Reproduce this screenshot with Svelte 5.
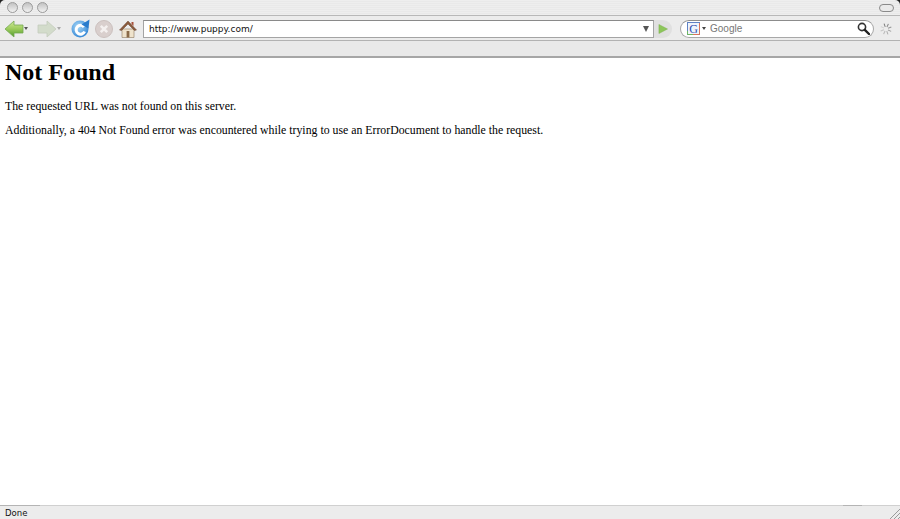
<script>
  const lights = [0, 1, 2]
  const spinner = Array.from({ length: 8 }, (_, i) => i)
</script>

<div class="window">
  <header class="chrome">
    <div class="titlebar">
      <div class="lights">
        {#each lights as l}
          <span class="light"></span>
        {/each}
      </div>
      <span class="pill"></span>
    </div>

    <div class="toolbar">
      <svg class="ico back" width="20" height="18" viewBox="0 0 20 18">
        <defs>
          <linearGradient id="bk" x1="0" y1="0" x2="0" y2="1">
            <stop offset="0" stop-color="#d2eb9a" />
            <stop offset="0.5" stop-color="#9ccb5c" />
            <stop offset="1" stop-color="#4f9a2c" />
          </linearGradient>
        </defs>
        <path d="M1 9 L10 1 V5 H19 V13 H10 V17 Z" fill="url(#bk)" stroke="#74a852" stroke-width="0.8" stroke-linejoin="round" />
      </svg>
      <span class="caret dark"></span>

      <svg class="ico fwd" width="20" height="18" viewBox="0 0 20 18">
        <path d="M19 9 L10 1 V5 H1 V13 H10 V17 Z" fill="#d3dccb" stroke="#c4ccbc" stroke-width="0.8" stroke-linejoin="round" />
      </svg>
      <span class="caret light-caret"></span>

      <svg class="ico reload" width="19" height="19" viewBox="0 0 19 19">
        <defs>
          <radialGradient id="rl" cx="0.4" cy="0.35" r="0.8">
            <stop offset="0" stop-color="#a8d8f7" />
            <stop offset="1" stop-color="#1f78cf" />
          </radialGradient>
        </defs>
        <circle cx="9" cy="10" r="8.5" fill="url(#rl)" />
        <path d="M13 8 A4.4 4.4 0 1 0 13.6 12.5" fill="none" stroke="#fff" stroke-width="3" />
        <path d="M10.5 5.5 L18.5 0.5 L17.5 9.5 Z" fill="#2a7ccc" />
      </svg>

      <svg class="ico stop" width="18" height="18" viewBox="0 0 18 18">
        <circle cx="9" cy="9" r="8.5" fill="#d9cfcd" stroke="#cbc0be" />
        <path d="M5.8 5.8 L12.2 12.2 M12.2 5.8 L5.8 12.2" stroke="#f4f0ef" stroke-width="2.6" />
      </svg>

      <svg class="ico home" width="18" height="18" viewBox="0 0 18 18">
        <path d="M3 9 H15 V17.5 H3 Z" fill="#efe3cc" stroke="#8d7a60" stroke-width="0.6" />
        <path d="M0.5 10 L9 1 L17.5 10 L15.5 10.5 L9 4 L2.5 10.5 Z" fill="#8a5a3c" stroke="#6a4630" stroke-width="0.5" />
        <path d="M12.5 2 H14.5 V6 L12.5 4 Z" fill="#a8503a" />
        <path d="M7.6 11 H10.4 V17.5 H7.6 Z" fill="#8a6a48" />
      </svg>

      <div class="urlbar">
        <span class="url">http://www.puppy.com/</span>
        <span class="url-caret"></span>
      </div>
      <div class="go">
        <svg width="10" height="10" viewBox="0 0 11 11"><path d="M1 0.5 L10.5 5.5 L1 10.5 Z" fill="#8cc65a" stroke="#7bb04c" stroke-width="0.5" /></svg>
      </div>

      <div class="search">
        <svg class="engine" width="13" height="13" viewBox="0 0 13 13">
          <rect x="0.5" y="0.5" width="12" height="12" fill="#eef3fb" stroke="#5f82c4" />
          <path d="M12.5 1 V12.5 H6" fill="none" stroke="#d9745a" />
          <path d="M0.5 9 V12.5 H6" fill="none" stroke="#6fb860" />
          <text x="6.5" y="10.8" class="g">G</text>
        </svg>
        <span class="engine-caret"></span>
        <span class="search-text">Google</span>
        <svg class="glass" width="13" height="13" viewBox="0 0 13 13">
          <circle cx="5" cy="5" r="3.6" fill="#fff" stroke="#333" stroke-width="1.6" />
          <path d="M7.8 7.8 L12 12" stroke="#222" stroke-width="2.4" stroke-linecap="round" />
        </svg>
      </div>

      <svg class="spin" width="12" height="14" viewBox="-7 -7 14 14">
        {#each spinner as s}
          <path d="M0 -2.6 V-6.6" stroke="#7d7d7d" stroke-opacity={1 - s * 0.11} stroke-width="1.2" transform="rotate({s * 45 - 20})" />
        {/each}
      </svg>
    </div>

    <div class="bookmarks"></div>
  </header>

  <main class="page">
    <h1>Not Found</h1>
    <p>The requested URL was not found on this server.</p>
    <p>Additionally, a 404 Not Found error was encountered while trying to use an ErrorDocument to handle the request.</p>
  </main>

  <footer class="status">
    <span class="seg left"></span>
    <span class="seg right"></span>
    <span>Done</span>
    <svg class="grip" width="11" height="11" viewBox="0 0 11 11">
      <path d="M1 11 L11 1 M5 11 L11 5 M9 11 L11 9" stroke="#9a9a9a" stroke-width="1" />
    </svg>
  </footer>
</div>

<style>
  :global(body) {
    background: #fff;
  }
  .window {
    height: 519px;
    width: 900px;
    display: flex;
    flex-direction: column;
    overflow: hidden;
    background: #fff;
  }
  .chrome {
    flex: none;
    height: 58px;
    display: flex;
    flex-direction: column;
    background: #222;
    border-bottom: 2px solid #a6a6a6;
    box-sizing: border-box;
  }
  .titlebar {
    height: 16px;
    flex: none;
    display: flex;
    align-items: center;
    justify-content: space-between;
    padding: 0 6px 0 7px;
    background: repeating-linear-gradient(#eeeeee 0 1px, #e9e9e9 1px 2px);
    border-bottom: 1px solid #b8b8b8;
    border-radius: 5px 5px 0 0;
    box-sizing: border-box;
  }
  .lights {
    display: flex;
    gap: 4px;
  }
  .light {
    width: 11px;
    height: 11px;
    border-radius: 50%;
    box-sizing: border-box;
    border: 1px solid #9b9b9b;
    background: linear-gradient(#c2c2c2, #f2f2f2);
  }
  .pill {
    width: 13px;
    height: 6px;
    border: 1px solid #8a8a8a;
    border-radius: 4px;
    background: #eaeaea;
  }
  .toolbar {
    height: 25px;
    flex: none;
    display: flex;
    align-items: center;
    padding: 1px 0 0 4px;
    box-sizing: border-box;
    border-bottom: 1px solid #b2b2b2;
    background: #ececec;
  }
  .ico {
    flex: none;
  }
  .caret {
    width: 0;
    height: 0;
    border-left: 2.5px solid transparent;
    border-right: 2.5px solid transparent;
    border-top: 3px solid #555;
  }
  .caret.light-caret {
    border-top-color: #aaa;
  }
  .fwd {
    margin-left: 9px;
  }
  .reload {
    margin-left: 10px;
  }
  .stop {
    margin-left: 5px;
  }
  .home {
    margin-left: 6px;
  }
  .urlbar {
    margin-left: 6px;
    width: 511px;
    height: 18px;
    box-sizing: border-box;
    background: #fff;
    border: 1px solid #a4a4a4;
    border-top-color: #8a8a8a;
    display: flex;
    align-items: center;
    justify-content: space-between;
    padding: 0 4px 0 5px;
  }
  .url {
    font: 9px "DejaVu Sans", sans-serif;
    color: #111;
  }
  .url-caret {
    width: 0;
    height: 0;
    border-left: 3.5px solid transparent;
    border-right: 3.5px solid transparent;
    border-top: 6px solid #555;
  }
  .go {
    width: 18px;
    height: 18px;
    flex: none;
    display: flex;
    align-items: center;
    justify-content: center;
    background: #e0e0e0;
    border-radius: 0 9px 9px 0;
  }
  .search {
    margin-left: 8px;
    width: 194px;
    height: 18px;
    box-sizing: border-box;
    flex: none;
    display: flex;
    align-items: center;
    background: #fff;
    border: 1px solid #a8a8a8;
    border-top-color: #8c8c8c;
    border-radius: 9px;
    padding: 0 1px 0 6px;
  }
  .engine {
    flex: none;
  }
  .g {
    font: 12px "Liberation Serif", serif;
    fill: #2f4fae;
    text-anchor: middle;
  }
  .engine-caret {
    width: 0;
    height: 0;
    margin-left: 2px;
    border-left: 2.5px solid transparent;
    border-right: 2.5px solid transparent;
    border-top: 3px solid #444;
  }
  .search-text {
    margin-left: 4px;
    font: 10px "Liberation Sans", sans-serif;
    color: #777;
    flex: 1;
  }
  .glass {
    flex: none;
    margin-right: 2px;
  }
  .spin {
    margin-left: 6px;
    flex: none;
  }
  .bookmarks {
    flex: 1;
    background: #e9e9e9;
  }
  .page {
    flex: 1;
    min-height: 0;
    padding: 0 5px;
    font-family: "Liberation Serif", serif;
    color: #000;
  }
  h1 {
    margin: 0 0 12px;
    font-size: 24px;
    line-height: 28px;
    font-weight: bold;
  }
  p {
    margin: 0 0 8px;
    font-size: 11.8px;
    line-height: 16px;
  }
  .status {
    flex: none;
    height: 14px;
    position: relative;
    display: flex;
    align-items: center;
    justify-content: space-between;
    padding-left: 5px;
    box-sizing: border-box;
    background: #ececec;
    border-top: 1px solid #d0d0d0;
    font: 8.5px "DejaVu Sans", sans-serif;
    color: #111;
  }
  .seg {
    position: absolute;
    top: -1px;
    height: 1px;
    background: #b4b4b4;
  }
  .seg.left {
    left: 0;
    width: 40px;
  }
  .seg.right {
    left: 843px;
    width: 19px;
  }
  .grip {
    position: absolute;
    right: 0;
    bottom: 0;
  }
</style>
